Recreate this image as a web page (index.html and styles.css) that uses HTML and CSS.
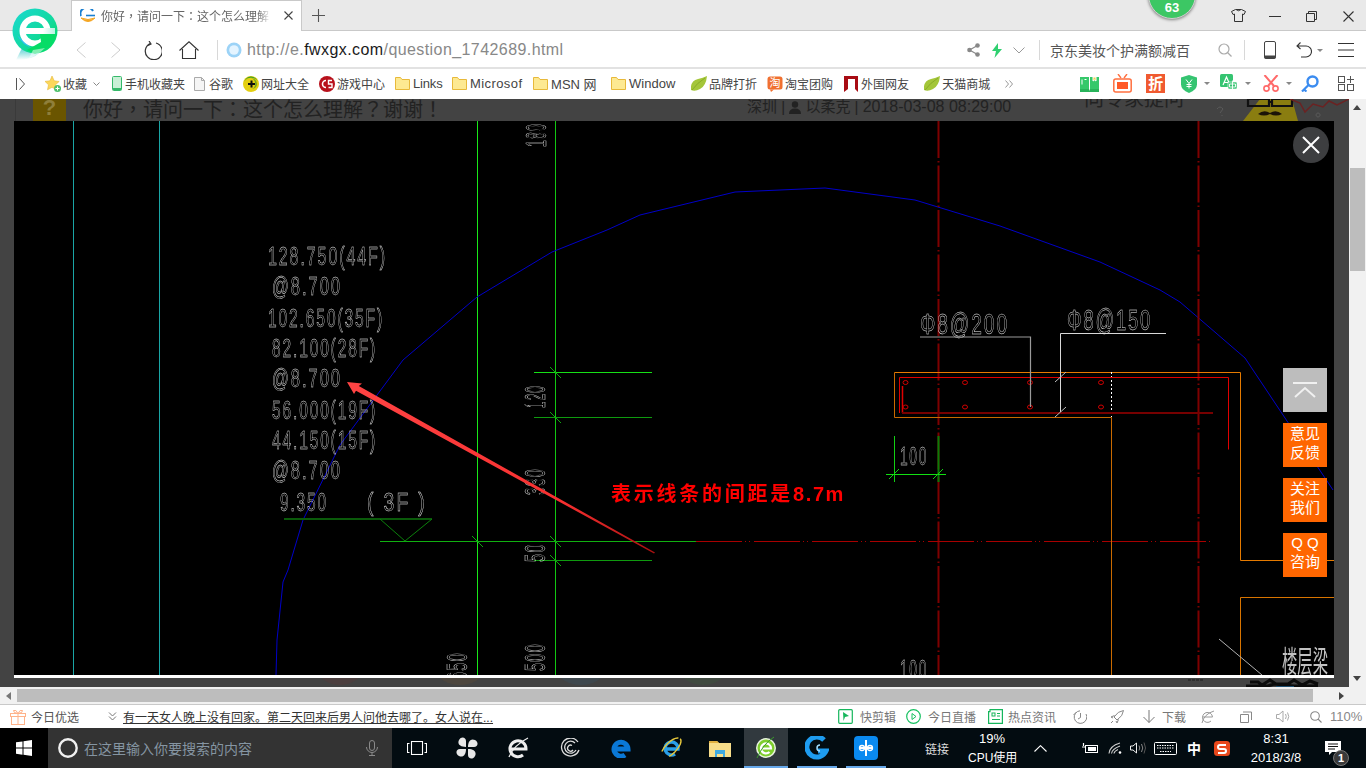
FILE: index.html
```html
<!DOCTYPE html>
<html lang="zh-CN">
<head>
<meta charset="utf-8">
<title>你好，请问一下：这个怎么理解？谢谢！</title>
<link rel="stylesheet" href="styles.css">
</head>
<body>
<div class="browser">
  <svg class="brand" width="48" height="56" viewBox="0 0 48 56">
    <defs>
      <linearGradient id="lg" x1="0" y1="0" x2="1" y2="1"><stop offset="0" stop-color="#1bd9d2"/><stop offset=".55" stop-color="#12d9a0"/><stop offset="1" stop-color="#00dd55"/></linearGradient>
      <linearGradient id="lt" x1="0" y1="0" x2="0" y2="1"><stop offset="0" stop-color="#2fc0f0"/><stop offset=".55" stop-color="#8fdfe0"/><stop offset="1" stop-color="#fff"/></linearGradient>
      <linearGradient id="lb" x1="0" y1="0" x2="1" y2="0"><stop offset="0" stop-color="#fff"/><stop offset=".6" stop-color="#fff"/><stop offset="1" stop-color="#b8f2e2"/></linearGradient>
    </defs>
    <path d="M14 36 L5 54 Q22 54 28 47 L36 38Z" fill="url(#lt)"/>
    <circle cx="24" cy="25" r="22.5" fill="url(#lg)"/>
    <path d="M13 38 Q8 33 6 29 L20 42Z" fill="#2fc0f0"/>
    <circle cx="24" cy="25" r="12.5" fill="none" stroke="#fff" stroke-width="6"/>
    <rect x="14" y="22" width="30" height="6" fill="url(#lb)"/>
    <path d="M29 28 H46 L40 40 L24 48 L16 44 L30 36Z" fill="#06dc66"/>
    <path d="M18 52 Q26 50 34 42 L22 44Z" fill="#fff" opacity=".5"/>
  </svg>

  <header class="tabbar">
    <div class="tab">
      <svg width="16" height="14" viewBox="0 0 16 14" fill="none"><path d="M1 7 A6 5.500 0 0 1 13 2" stroke="#1a7fd0" stroke-width="2"/><path d="M1 9 Q8 16 15 9 Q8 12 1 9z" fill="#f5a623" stroke="#f5a623"/><path d="M6 6.500 H15" stroke="#1a7fd0" stroke-width="1.600"/></svg>
      <span class="tab-title" lang="zh-Hant">你好，请问一下：这个怎么理解？谢谢！</span>
      <svg class="tab-x" width="9" height="9" viewBox="0 0 9 9"><path d="M.5.5l8 8M8.5.5l-8 8" stroke="#444" stroke-width="1.1"/></svg>
    </div>
    <svg class="tab-plus" width="13" height="13" viewBox="0 0 13 13"><path d="M6.5 0v13M0 6.5h13" stroke="#555" stroke-width="1.1"/></svg>
    <div class="win-badge">63</div>
    <svg class="win-shirt" width="15" height="13" viewBox="0 0 15 13" fill="none"><path d="M4.5.5 H10.5 L14.5 2.5 L13 5.5 L11.5 5 V12.5 H3.5 V5 L2 5.5 L.5 2.5Z M5 .5 Q7.5 3 10 .5" stroke="#333"/></svg>
    <svg class="win-min" width="12" height="1" viewBox="0 0 12 1"><path d="M0 .5h12" stroke="#333"/></svg>
    <svg class="win-max" width="11" height="11" viewBox="0 0 11 11" fill="none"><path d="M.5 2.5h8v8h-8zM2.5 2.5v-2h8v8h-2" stroke="#333"/></svg>
    <svg class="win-close" width="11" height="11" viewBox="0 0 11 11"><path d="M.5.5l10 10M10.5.5l-10 10" stroke="#333" stroke-width="1.1"/></svg>
  </header>

  <nav class="toolbar">
    <svg class="t-back" width="10" height="16" viewBox="0 0 10 16" fill="none"><path d="M9.5.5L1 8l8.500 7.500" stroke="#ccc"/></svg>
    <svg class="t-fwd" width="10" height="16" viewBox="0 0 10 16" fill="none"><path d="M.5.500L9 8 .5 15.500" stroke="#ccc"/></svg>
    <svg class="t-ref" width="19" height="19" viewBox="0 0 19 19" fill="none"><path d="M7 2.600A8.500 8.500 0 1 0 13 2M6 0l2 3-3 1.500" stroke="#333" stroke-width="1.200"/></svg>
    <svg class="t-home" width="20" height="18" viewBox="0 0 20 18" fill="none"><path d="M.5 9.500L10 .8l9.500 8.700M3.500 8v9.500h13V8" stroke="#333" stroke-width="1.100"/></svg>
    <i class="t-sep"></i>
    <svg class="t-sec" width="16" height="16" viewBox="0 0 16 16"><circle cx="8" cy="8" r="7.500" fill="#9cd3f7"/><circle cx="8" cy="8" r="4.800" fill="#e4f4ff"/></svg>
    <div class="url"><span class="url-dim">http://e.</span><span class="url-dark">fwxgx.com</span><span class="url-dim">/question_1742689.html</span></div>
    <svg class="t-share" width="13" height="14" viewBox="0 0 13 14"><circle cx="2.500" cy="7" r="2.300" fill="#888"/><circle cx="10.500" cy="2.500" r="2.300" fill="#888"/><circle cx="10.500" cy="11.500" r="2.300" fill="#888"/><path d="M2.500 7l8-4.500M2.500 7l8 4.500" stroke="#888" stroke-width="1.200"/></svg>
    <svg class="t-bolt" width="10" height="15" viewBox="0 0 10 15"><path d="M6 0L0 8h4L2.500 15 10 6H6z" fill="#30d070"/></svg>
    <svg class="t-chev" width="12" height="7" viewBox="0 0 12 7" fill="none"><path d="M.5.500L6 6 11.500.5" stroke="#999"/></svg>
    <i class="t-sep s2"></i>
    <div class="sbox">京东美妆个护满额减百</div>
    <svg class="t-mag" width="14" height="14" viewBox="0 0 14 14" fill="none"><circle cx="6" cy="6" r="5" stroke="#aaa" stroke-width="1.200"/><path d="M9.500 9.500L13.500 13.500" stroke="#aaa" stroke-width="1.200"/></svg>
    <i class="t-sep s3"></i>
    <svg class="t-phone" width="12" height="18" viewBox="0 0 12 18" fill="none"><rect x=".5" y=".5" width="11" height="17" rx="1.500" stroke="#444"/><path d="M.5 14.500h11v3H.5z" fill="#444"/></svg>
    <svg class="t-undo" width="16" height="16" viewBox="0 0 16 16" fill="none"><path d="M1 4h9a5 5 0 0 1 0 11H5M4.500.5L1 4l3.500 3" stroke="#333" stroke-width="1.100"/></svg>
    <svg class="t-drop" width="6" height="3" viewBox="0 0 6 3"><path d="M0 0h6L3 3z" fill="#888"/></svg>
    <svg class="t-menu" width="16" height="14" viewBox="0 0 16 14"><path d="M0 .5h16M0 7h16M0 13.500h16" stroke="#333"/></svg>
  </nav>

  <nav class="bookmarks">
    <svg class="b-side" width="9" height="12" viewBox="0 0 9 12" fill="none"><path d="M.5 0v12M3.500.5L8.500 6l-5 5.500" stroke="#555"/></svg>
    <div class="bm b-fav">
      <svg width="16" height="16" viewBox="0 0 16 16"><path d="M7 0l2.200 4.800 5 .6-3.700 3.400 1 5L7 11.300 2.500 13.800l1-5L0 5.400l5-.6z" fill="#fbd75b" stroke="#e8b93a" stroke-width=".6"/><circle cx="12.500" cy="12.500" r="3.500" fill="#4cc06a"/><path d="M12.500 10.500v4M10.500 12.500h4" stroke="#fff"/></svg>
      <span>收藏</span>
      <svg class="b-down" width="7" height="4" viewBox="0 0 7 4" fill="none"><path d="M.5.500L3.500 3.500 6.500.5" stroke="#888"/></svg>
    </div>
    <div class="bm b-mob"><svg width="10" height="15" viewBox="0 0 10 15" fill="none"><rect x=".5" y=".5" width="9" height="14" rx="1" stroke="#36b96a"/><path d="M1 12h8v2H1z" fill="#36b96a"/><rect x="1" y="1" width="8" height="11" fill="#c9f0d6"/></svg><span>手机收藏夹</span></div>
    <div class="bm b-doc"><svg width="11" height="14" viewBox="0 0 11 14" fill="#f5f5f5" stroke="#aaa"><path d="M.5.500h7l3 3v10H.5z"/><path d="M7.500.500v3h3" fill="none"/></svg><span>谷歌</span></div>
    <div class="bm b-tight"><svg width="16" height="16" viewBox="0 0 16 16"><circle cx="8" cy="8" r="8" fill="#e4cf10"/><path d="M1 8a7 7 0 0 1 14-1 6 5 0 0 0-14 1z" fill="#3a9e2a"/><path d="M8 2a6 6 0 0 1 6 6 5 5 0 0 1-5 5 6 6 0 0 0-1-11z" fill="#2d8a22" opacity=".6"/><path d="M8.500 4.500v7M5 8h7" stroke="#111" stroke-width="2"/></svg><span>网址大全</span></div>
    <div class="bm b-tight"><svg width="16" height="16" viewBox="0 0 16 16"><circle cx="8" cy="8" r="8" fill="#b8111c"/><path d="M7 4.500A3.500 3.500 0 1 0 7 11.500" fill="none" stroke="#fff" stroke-width="1.600"/><path d="M13 4.500H9.500V8H13V11.500H9.500" fill="none" stroke="#fff" stroke-width="1.400"/></svg><span>游戏中心</span></div>
    <div class="bm"><svg width="15" height="13" viewBox="0 0 15 13"><use href="#folder"/></svg><span class="lat w-links">Links</span></div>
    <div class="bm b-ms"><svg width="15" height="13" viewBox="0 0 15 13"><use href="#folder"/></svg><span class="lat w-ms">Microsof</span></div>
    <div class="bm b-wide"><svg width="15" height="13" viewBox="0 0 15 13"><use href="#folder"/></svg><span class="lat w-msn">MSN 网</span></div>
    <div class="bm b-wide"><svg width="15" height="13" viewBox="0 0 15 13"><use href="#folder"/></svg><span class="lat w-win">Window</span></div>
    <div class="bm b-tight"><svg width="16" height="15" viewBox="0 0 16 15"><use href="#leaf"/></svg><span>品牌打折</span></div>
    <div class="bm b-tao"><svg width="16" height="16" viewBox="0 0 16 16"><rect x=".5" y=".5" width="15" height="13" rx="2.500" fill="#f07030"/><path d="M3 13.500l1 2.500 3-2.500z" fill="#f07030"/><text x="8" y="11" class="svg-tao">淘</text></svg><span>淘宝团购</span></div>
    <div class="bm b-wide"><svg width="14" height="16" viewBox="0 0 14 16"><path d="M0 0h14v16l-3-3V3H4v10l-4 3z" fill="#a80c14"/></svg><span>外国网友</span></div>
    <div class="bm b-tight b-wide"><svg width="16" height="15" viewBox="0 0 16 15"><use href="#leaf"/></svg><span>天猫商城</span></div>
    <svg class="b-more" width="8" height="8" viewBox="0 0 8 8" fill="none"><path d="M.5.500L3.500 4 .5 7.500M4.500.5L7.500 4l-3 3.500" stroke="#999"/></svg>
    <svg class="r-book" width="19" height="16" viewBox="0 0 19 16"><path d="M0 1h9v14H0zM10 1h9v14h-9z" fill="#35c86a"/><path d="M0 13h9l.5 2 .5-2h9v3H0z" fill="#28b35a"/><path d="M2 3.500v5M13 1h3v4l-1.500-1L13 5z" stroke="#fff" fill="#f7c948"/><path d="M4.500 3.500h2" stroke="#fff"/></svg>
    <svg class="r-tv" width="19" height="19" viewBox="0 0 19 19" fill="none"><rect x=".8" y="5" width="17.400" height="13" rx="2" stroke="#ff7040" stroke-width="1.500"/><rect x="4" y="8" width="11" height="7" fill="#ff5a28"/><path d="M5 0l3 4M14 0l-3 4" stroke="#ff7040" stroke-width="1.400"/></svg>
    <div class="r-zhe">折</div>
    <svg class="r-shield" width="16" height="18" viewBox="0 0 16 18"><path d="M8 0l8 2.500v7Q16 15 8 18 0 15 0 9.500v-7z" fill="#35c471"/><path d="M5 4.500l3 4 3-4M8 8.500v5M5.500 9.500h5M5.500 11.500h5" stroke="#fff" fill="none"/></svg>
    <svg class="r-arr a1" width="6" height="3" viewBox="0 0 6 3"><path d="M0 0h6L3 3z" fill="#888"/></svg>
    <svg class="r-tr" width="19" height="19" viewBox="0 0 19 19"><rect width="13" height="13" rx="1.500" fill="#35c471"/><path d="M3 11L6.500 3 10 11M4.500 8.500h4" stroke="#fff" fill="none" stroke-width="1.200"/><rect x="8" y="8" width="9" height="7" rx="1" fill="#35c471" stroke="#fff" stroke-width=".6"/><path d="M12.500 6.500v12M9.500 10h6v3h-6z" stroke="#fff" fill="none" stroke-width=".9"/></svg>
    <svg class="r-arr a2" width="6" height="3" viewBox="0 0 6 3"><path d="M0 0h6L3 3z" fill="#888"/></svg>
    <svg class="r-cut" width="16" height="17" viewBox="0 0 16 17" fill="none"><path d="M1.500 0L11 11M14.500 0L5 11" stroke="#ff6a6a" stroke-width="2"/><circle cx="3.500" cy="13.500" r="2.600" stroke="#ff6a6a" stroke-width="1.600"/><circle cx="12.500" cy="13.500" r="2.600" stroke="#ff6a6a" stroke-width="1.600"/></svg>
    <svg class="r-arr a3" width="6" height="3" viewBox="0 0 6 3"><path d="M0 0h6L3 3z" fill="#888"/></svg>
    <svg class="r-key" width="18" height="17" viewBox="0 0 18 17" fill="none"><circle cx="11.500" cy="6.500" r="5" stroke="#3b8cf0" stroke-width="2.400"/><path d="M7.500 10L1 16.500M3 14.500L5.500 16.500" stroke="#3b8cf0" stroke-width="2.200"/></svg>
    <svg class="r-grid" width="16" height="15" viewBox="0 0 16 15" fill="none" stroke="#555"><rect x=".5" y=".5" width="6" height="6"/><rect x=".5" y="8.500" width="6" height="6"/><rect x="9.500" y="8.500" width="6" height="6"/><path d="M12.500 0v7M9 3.500h7"/></svg>
  </nav>

  <div class="content">
    <main class="viewer">
      <div class="page-head">
        <div class="qmark">?</div>
        <div class="q-title" lang="zh-Hant">你好，请问一下：这个怎么理解？谢谢！</div>
        <div class="q-meta">深圳 | <svg width="12" height="13" viewBox="0 0 12 13"><circle cx="6" cy="3.500" r="3.200" fill="#222"/><path d="M0 13q0-5.500 6-5.500T12 13z" fill="#222"/></svg> 以柔克 | <span class="q-date">2018-03-08 08:29:00</span></div>
        <div class="q-ask">向专家提问</div>
      </div>
      <svg class="doodle" width="139" height="22" viewBox="0 0 139 22">
        <path d="M33 22L50 0H82L88 22z" fill="#8a7d10"/>
        <path d="M38 0h21v7H38zM62 0h20v7H62zM59 3h3" fill="none" stroke="#111" stroke-width="2.200"/>
        <path d="M48 15q6-5 12-1 6-4 12 1-6 3-12 0-6 3-12 0z" fill="#1c1408"/>
        <path d="M80 0l10 4 5 9 8-8 10 3 6-6 8 4 12-6" fill="none" stroke="#6b2222" stroke-width="1.500"/>
        <path d="M7 10q3-4 6 0l-3 4M12 16v1M108 18a2 2 0 1 1 .1 0" fill="none" stroke="#5a5a5a"/>
      </svg>
      <svg class="under" width="1349" height="12" viewBox="0 0 1349 12">
        <ellipse cx="340" cy="-8" rx="22" ry="16" fill="#4c3f3f"/>
        <ellipse cx="460" cy="-8" rx="24" ry="16" fill="#4d463e"/>
        <ellipse cx="581" cy="-8" rx="24" ry="16" fill="#3f484e"/>
        <ellipse cx="703" cy="-8" rx="23" ry="16" fill="#404a40"/>
        <path d="M1250 5h8l4 3 8-5 6 4h12l6-4 8 5 8-4 8 3M1246 9h22l6-2 20 2h24" fill="none" stroke="#0c0c0c" stroke-width="3"/>
        <path d="M1276 10h18" stroke="#1f4f70" stroke-width="2"/>
        <path d="M1188 3h16" stroke="#2a2a2a" stroke-width="1.500" stroke-dasharray="3 1"/>
      </svg>
      <figure class="lightbox">
        <svg class="drawing" width="1320" height="554" viewBox="14 121 1320 554">
          <defs>
            <linearGradient id="arrow" gradientUnits="userSpaceOnUse" x1="347" y1="382" x2="655" y2="553"><stop offset="0" stop-color="#ff4444"/><stop offset=".7" stop-color="#f83030"/><stop offset="1" stop-color="#a81010"/></linearGradient>
          </defs>
          <rect x="14" y="121" width="1320" height="554" fill="#000"/>
          <path d="M73.500 121V675M159.500 121V675" stroke="#1aa5a5"/>
          <path d="M477.500 121V675" stroke="#18e818"/>
          <path d="M555.500 121V675" stroke="#12c612"/>
          <path d="M276 675L277 640 283 582 288 570 303 520 340 445 403 360 477 297 552 252 607 230 640 215 735 192 825 188 915 200 1000 226 1100 262 1160 290 1180 302 1245 358 1333 490" fill="none" stroke="#0000c8"/>
          <path d="M938.500 121V675M1198.500 121V675" stroke="#7e0000" stroke-width="2" stroke-dasharray="37 3 1.500 3"/>

          <path d="M534 372.500H652" stroke="#16e016"/>
          <path d="M534 417.500H652M534 560.500H652" stroke="#0f9a0f"/>
          <path d="M380 541.500H696" stroke="#10b010"/>
          <path d="M696 541.500H1213" stroke="#a80000" stroke-dasharray="46 3 1 3 1 4"/>
          <path d="M284 519H432" stroke="#0a5a0a" stroke-width="2"/>
          <path d="M380 519L405 541 432 519" fill="none" stroke="#0c800c"/>
          <path d="M550 367l11 11M550 412l11 11M472 536l11 11M550 536l11 11M550 555l11 11" stroke="#0fa80f"/>

          <path d="M894.500 372.500H1240.500V560.500H1334" fill="none" stroke="#e57a00"/>
          <path d="M894.500 372.500V417.500H1111.500V675" fill="none" stroke="#c96a00"/>
          <path d="M1111.500 372V417" stroke="#fff" stroke-dasharray="2 2"/>
          <path d="M1240.500 675V597.500H1334" fill="none" stroke="#d87400"/>
          <path d="M899.500 413V377.500H1228.500V449.500" fill="none" stroke="#e00000"/>
          <path d="M902.500 386V413" stroke="#e00000" stroke-width="1.500"/>
          <path d="M902 413H1213" stroke="#760000" stroke-width="2"/>
          <g fill="none" stroke="#d00000"><ellipse cx="905.500" cy="382.500" rx="2.500" ry="2"/><ellipse cx="965" cy="382.500" rx="2.500" ry="2"/><ellipse cx="1030" cy="382.500" rx="2.500" ry="2"/><ellipse cx="1101" cy="382.500" rx="2.500" ry="2"/><ellipse cx="905.500" cy="407" rx="2.500" ry="2"/><ellipse cx="965" cy="407" rx="2.500" ry="2"/><ellipse cx="1030" cy="407" rx="2.500" ry="2"/><ellipse cx="1101" cy="407" rx="2.500" ry="2"/></g>

          <path d="M920 337H1030.500V407" fill="none" stroke="#9a9a9a" stroke-width="1.200"/>
          <path d="M1166 333.500H1060.500V412" fill="none" stroke="#d8d8d8"/>
          <path d="M1055 382l11-10M1055 417l11-10" stroke="#bbb"/>

          <path d="M894.500 436V482" stroke="#12d012"/>
          <path d="M938.500 436V482" stroke="#087c08" stroke-width="2"/>
          <path d="M886 474.500H946" stroke="#12e012"/>
          <path d="M889 479l10-10M933 479l10-10" stroke="#12d012"/>
          <path d="M1219 639L1262 675" stroke="#b0b0b0"/>

          <g class="cad">
            <text x="268" y="265" textLength="119" lengthAdjust="spacingAndGlyphs">128.750(44F)</text>
            <text x="272" y="295" textLength="70" lengthAdjust="spacingAndGlyphs">@8.700</text>
            <text x="268" y="327" textLength="116" lengthAdjust="spacingAndGlyphs">102.650(35F)</text>
            <text x="272" y="357" textLength="105" lengthAdjust="spacingAndGlyphs">82.100(28F)</text>
            <text x="272" y="387" textLength="70" lengthAdjust="spacingAndGlyphs">@8.700</text>
            <text x="272" y="419" textLength="105" lengthAdjust="spacingAndGlyphs">56.000(19F)</text>
            <text x="272" y="449" textLength="105" lengthAdjust="spacingAndGlyphs">44.150(15F)</text>
            <text x="272" y="479" textLength="70" lengthAdjust="spacingAndGlyphs">@8.700</text>
            <text x="280" y="511" textLength="48" lengthAdjust="spacingAndGlyphs">9.350</text>
            <text x="367" y="511" textLength="60" lengthAdjust="spacingAndGlyphs" xml:space="preserve">( 3F )</text>
            <text x="900" y="465" textLength="28" lengthAdjust="spacingAndGlyphs">100</text>
            <text x="900" y="678" textLength="28" lengthAdjust="spacingAndGlyphs">100</text>
            <text x="920" y="334" textLength="89" lengthAdjust="spacingAndGlyphs" class="big">Φ8@200</text>
            <text x="1067" y="330" textLength="85" lengthAdjust="spacingAndGlyphs" class="big">Φ8@150</text>
            <text transform="translate(546 147) rotate(-90)" textLength="24" lengthAdjust="spacingAndGlyphs" class="big">180</text>
            <text transform="translate(545 408) rotate(-90)" textLength="23" lengthAdjust="spacingAndGlyphs" class="big">120</text>
            <text transform="translate(545 495) rotate(-90)" textLength="27" lengthAdjust="spacingAndGlyphs" class="big">330</text>
            <text transform="translate(545 562) rotate(-90)" textLength="19" lengthAdjust="spacingAndGlyphs" class="big">50</text>
            <text transform="translate(545 671) rotate(-90)" textLength="28" lengthAdjust="spacingAndGlyphs" class="big">500</text>
            <text transform="translate(467 680) rotate(-90)" textLength="28" lengthAdjust="spacingAndGlyphs" class="big">650</text>
            <text x="1282" y="672" textLength="46" lengthAdjust="spacingAndGlyphs" class="cjk">楼层梁</text>
          </g>

          <polygon points="347,382 362,383.500 358.800,386 655,552.500 654,553.500 356,390.800 354,394" fill="url(#arrow)"/>
          <text x="611" y="501" class="note">表示线条的间距是<tspan class="note-num">8.7m</tspan></text>
        </svg>
        <button class="lb-close" type="button" aria-label="关闭"><svg width="18" height="18" viewBox="0 0 18 18"><path d="M1 1l16 16M17 1L1 17" stroke="#fff" stroke-width="2"/></svg></button>
      </figure>
      <aside class="side-tools">
        <div class="tool tool-top"><svg width="26" height="18" viewBox="0 0 26 18" fill="none" stroke="#f0f0f0" stroke-width="2"><path d="M1 2h24M3 16L13 7l10 9"/></svg></div>
        <div class="tool">意见<br>反馈</div>
        <div class="tool">关注<br>我们</div>
        <div class="tool tool-qq">Q Q<br>咨询</div>
      </aside>
    </main>
    <div class="vscroll">
      <svg class="sc-up" width="8" height="5" viewBox="0 0 8 5"><path d="M4 0l4 5H0z" fill="#444"/></svg>
      <div class="vthumb"></div>
      <svg class="sc-down" width="8" height="5" viewBox="0 0 8 5"><path d="M0 0h8L4 5z" fill="#444"/></svg>
    </div>
  </div>

  <div class="hscroll">
    <svg width="5" height="8" viewBox="0 0 5 8"><path d="M5 0v8L0 4z" fill="#777"/></svg>
    <div class="hthumb"></div>
    <svg width="5" height="8" viewBox="0 0 5 8"><path d="M0 0v8l5-4z" fill="#444"/></svg>
  </div>

  <footer class="status">
    <svg class="st-gift" width="16" height="16" viewBox="0 0 16 16" fill="none" stroke="#ffb38a"><rect x=".5" y="4.500" width="15" height="3"/><rect x="1.500" y="7.500" width="13" height="8"/><path d="M8 4.500v11M8 4.500Q3 4 3.500 1.500 6 0 8 4.500 10 0 12.500 1.500 13 4 8 4.500"/></svg>
    <span class="st-lbl st-today">今日优选</span>
    <svg class="st-dbl" width="9" height="9" viewBox="0 0 9 9" fill="none" stroke="#777"><path d="M1 .5L4.500 4 8 .5M1 4.500L4.500 8 8 4.500"/></svg>
    <a class="st-news">有一天女人晚上没有回家。第二天回来后男人问他去哪了。女人说在...</a>
    <svg class="st-i1" width="15" height="15" viewBox="0 0 15 15" fill="none"><rect x=".7" y=".7" width="13.600" height="13.600" rx="1" stroke="#16b65c" stroke-width="1.200"/><path d="M5 3l6 4-4 1-1.500 4z" fill="#16b65c"/></svg>
    <span class="st-lbl st-l1">快剪辑</span>
    <svg class="st-i2" width="15" height="15" viewBox="0 0 15 15" fill="none"><circle cx="7.500" cy="7.500" r="6.800" stroke="#16c060" stroke-width="1.200"/><path d="M6 4.500l4 3-4 3z" stroke="#16c060"/></svg>
    <span class="st-lbl st-l2">今日直播</span>
    <svg class="st-i3" width="15" height="15" viewBox="0 0 15 15" fill="none" stroke="#16b65c"><path d="M.6 2.600h1.400V.6h12.400v13.800H.6z" stroke-width="1.200"/><rect x="4" y="4" width="3" height="3"/><path d="M9 4.500h3M9 7h3M4 10.500h8"/></svg>
    <span class="st-lbl st-l3">热点资讯</span>
    <svg class="st-i4" width="14" height="14" viewBox="0 0 14 14" fill="none" stroke="#888"><path d="M13 4A6.300 6.300 0 1 1 7 .8"/><path d="M7.500 3v4.500L5 9M.5 5l3-3"/></svg>
    <svg class="st-i5" width="14" height="14" viewBox="0 0 14 14" fill="none" stroke="#888"><path d="M13.500.5Q8 1 4 7l3 3q6-4 6.500-9.500zM4.500 5.500L1 7l2 1M8.500 9.500L7 13l-1-2M3 11l-2 2"/></svg>
    <svg class="st-i6" width="12" height="13" viewBox="0 0 12 13" fill="none" stroke="#777"><path d="M6 0v12.500M.5 7L6 12.500 11.500 7"/></svg>
    <span class="st-lbl st-l4">下载</span>
    <svg class="st-i7" width="14" height="14" viewBox="0 0 14 14" fill="none" stroke="#999"><path d="M1.500 7h10A5 5 0 1 0 10 11M1 13q2-9 12-12"/></svg>
    <svg class="st-i8" width="12" height="12" viewBox="0 0 12 12" fill="none" stroke="#888"><path d="M.5 3.500h8v8h-8zM3 1h8.500v8"/></svg>
    <svg class="st-i9" width="14" height="13" viewBox="0 0 14 13" fill="none" stroke="#aaa"><path d="M.5 4.500h2.500L7 1v11L3 8.500H.5zM9.500 4q1.500 2.500 0 5M11.500 2.500q2.500 4 0 8"/></svg>
    <svg class="st-i10" width="12" height="12" viewBox="0 0 12 12" fill="none" stroke="#888" stroke-width="1.100"><circle cx="5" cy="5" r="4.300"/><path d="M8 8l3.500 3.500"/></svg>
    <span class="st-zoom">110%</span>
  </footer>

  <div class="taskbar">
    <div class="tk-start"><svg width="16" height="16" viewBox="0 0 16 16"><path d="M0 2.300l6.500-.9v6.200H0zM7.500 1.300L16 0v7.600H7.500zM0 8.500h6.500v6.200L0 13.700zM7.500 8.500H16V16l-8.500-1.200z" fill="#fff"/></svg></div>
    <div class="tk-search">
      <svg width="20" height="20" viewBox="0 0 20 20" fill="none"><circle cx="10" cy="10" r="8.700" stroke="#f0f0f0" stroke-width="2.400"/></svg>
      <span class="tk-hint">在这里输入你要搜索的内容</span>
      <svg class="tk-mic" width="12" height="16" viewBox="0 0 12 16" fill="none" stroke="#8a8a8a"><rect x="3.500" y=".5" width="5" height="10" rx="2.500"/><path d="M.5 7a5.500 5.500 0 0 0 11 0M6 12.500v3M3 15.500h6"/></svg>
    </div>
    <div class="tk-app"><svg width="20" height="14" viewBox="0 0 20 14" fill="none" stroke="#fff" stroke-width="1.100"><rect x="4.500" y=".5" width="11" height="13"/><path d="M2.500 2.500H.5v9h2M17.500 2.500h2v9h-2"/></svg></div>
    <div class="tk-app"><svg width="22" height="22" viewBox="0 0 22 22" fill="#e8e8e8"><path d="M10 10C4 10 1 7 3 3s7-3 7 1zM12 10c0-6 3-9 7-7s3 7-1 7zM12 12c6 0 9 3 7 7s-7 3-7-1zM10 12c0 6-3 9-7 7s-3-7 1-7z"/></svg></div>
    <div class="tk-app"><svg width="22" height="24" viewBox="-11 -12 22 24" fill="none"><path d="M-8 1H8A8 8 0 1 0 5 7" stroke="#eee" stroke-width="3"/><path d="M-9 9Q-4-3 10-10" stroke="#eee" stroke-width="1.300"/></svg></div>
    <div class="tk-app"><svg width="20" height="20" viewBox="-10 -10 20 20" fill="none" stroke="#ddd" stroke-width="1.300"><path d="M8-6A9 9 0 1 0 9 2M5-5A6 6 0 1 0 6 2M2-2.500A3 3 0 1 0 3 2"/></svg></div>
    <div class="tk-app"><svg width="20" height="20" viewBox="-10 -10 20 20" fill="none"><path d="M-7 1H7A7 7 0 1 0 4 7" stroke="#0a78d6" stroke-width="5"/></svg></div>
    <div class="tk-app"><svg width="24" height="24" viewBox="-12 -12 24 24" fill="none"><path d="M-6 1H7A6.500 6.500 0 1 0 4 6" stroke="#2a9fe8" stroke-width="3.400"/><ellipse cx="0" cy="0" rx="13" ry="5.500" transform="rotate(-45)" stroke="#e6c83c" stroke-width="1.400" stroke-dasharray="22 14"/></svg></div>
    <div class="tk-app"><svg width="22" height="18" viewBox="0 0 22 18"><path d="M0 2h8l2 2h12v14H0z" fill="#f7dd8a"/><path d="M0 2h8l2 2H0z" fill="#e0b040"/><path d="M6 11h10v7h-2v-3H8v3H6z" fill="#3fa9e0"/></svg></div>
    <div class="tk-app tk-active"><svg width="22" height="24" viewBox="-11 -12 22 24" fill="none"><circle r="10" fill="#eaf4e0"/><circle r="8.500" fill="#7fce2e"/><path d="M-5 .5H5A5 5 0 1 0 3.500 4" stroke="#fff" stroke-width="2.200"/><path d="M-9 10Q-3-4 8-11" stroke="#3a9a2a" stroke-width="1"/></svg></div>
    <div class="tk-app tk-open"><svg width="24" height="24" viewBox="-12 -12 24 24" fill="none"><path d="M7-8A10 10 0 1 0 9 3H1" stroke="#1e9cf0" stroke-width="5"/><path d="M3-3A3 3 0 1 0 3 3" stroke="#9fdcff" stroke-width="1.500"/></svg></div>
    <div class="tk-app tk-open tk-last"><svg width="24" height="24" viewBox="0 0 24 24" fill="none"><rect width="24" height="24" rx="4" fill="#0a8af0"/><path d="M12 4v16M5 12h14" stroke="#fff" stroke-width="2"/><circle cx="8" cy="12" r="2.500" stroke="#fff" stroke-width="1.300"/><circle cx="16" cy="12" r="2.500" stroke="#fff" stroke-width="1.300"/></svg></div>
    <div class="tray">
      <span class="tr-link">链接</span>
      <div class="tr-cpu"><span class="tr-pct">19%</span><br>CPU使用</div>
      <svg class="tr-chev" width="13" height="7" viewBox="0 0 13 7" fill="none" stroke="#fff" stroke-width="1.100"><path d="M.5 6.500L6.500.7l6 5.800"/></svg>
      <svg class="tr-bat" width="16" height="11" viewBox="0 0 16 11" fill="none"><rect x="3.500" y="2.500" width="12" height="7" stroke="#fff"/><rect x="6" y="4" width="8" height="4" fill="#fff"/><path d="M0 4h3M1.500 0v3" stroke="#fff" stroke-width="1.200"/></svg>
      <svg class="tr-wifi" width="14" height="12" viewBox="0 0 14 12" fill="none" stroke="#ccc" stroke-width="1.100"><path d="M1 11.500Q1.500 4 12 1M3.500 11.500Q4 7 12 4M6 11.500Q6.500 9 10 7.500"/><circle cx="12" cy="10.500" r="1.300" fill="#fff" stroke="none"/></svg>
      <svg class="tr-vol" width="16" height="12" viewBox="0 0 16 12" fill="none" stroke="#eee"><path d="M.5 4h2.500L6.500 1v10L3 8H.5z"/><path d="M9 3.500q1.500 2.500 0 5M11.500 2q2.500 4 0 8" stroke="#888"/><path d="M14 .5q3 5.500 0 11" stroke="#555"/></svg>
      <svg class="tr-kbd" width="23" height="13" viewBox="0 0 23 13" fill="none" stroke="#fff"><rect x=".5" y=".5" width="22" height="12" rx="1"/><path d="M3 3.500h17M3 6h17M6 9.500h11" stroke-dasharray="1.500 1"/></svg>
      <span class="tr-ime">中</span>
      <svg class="tr-s" width="16" height="15" viewBox="0 0 16 15"><rect width="16" height="15" rx="3.500" fill="#e8481c"/><path d="M12 4H6Q4 4 4 6T6 8H10Q12 8 12 10T10 12H4" fill="none" stroke="#fff" stroke-width="2"/></svg>
      <div class="tr-clock"><span>8:31</span><span>2018/3/8</span></div>
      <div class="tr-note">
        <svg width="16" height="15" viewBox="0 0 16 15"><path d="M0 0h16v11H7l-3 3v-3H0z" fill="#fff"/><path d="M3 3h10M3 5.500h10M3 8h7" stroke="#111"/></svg>
        <span class="tr-badge">1</span>
      </div>
    </div>
  </div>
</div>

<svg class="defs" width="0" height="0">
  <defs>
    <g id="folder"><path d="M.5.500h5l1.500 2h7.500v10H.5z" fill="#fde992" stroke="#e8b93a"/></g>
    <g id="leaf"><path d="M0 14Q-1 5 7 3 12 2 16 0 15 10 9 13 4 16 0 14z" fill="#a4c639"/><path d="M1 14Q6 7 14 2" stroke="#7da020" fill="none" stroke-width=".7"/></g>
  </defs>
</svg>
</body>
</html>
```
FILE: styles.css
```css
* { box-sizing: border-box; }
html, body { margin: 0; padding: 0; background: #fff; }
body { overflow: hidden; font-family: "Liberation Sans", "Noto Sans CJK SC", sans-serif; }
svg { display: block; flex: none; }
.defs { position: absolute; }
.browser { position: relative; width: 1366px; height: 768px; display: flex; flex-direction: column; overflow: hidden; }
.brand { position: absolute; left: 11px; top: 6px; z-index: 5; }

/* tab strip */
.tabbar { height: 31px; background: #e9e9e9; border-bottom: 1px solid #c9c9c9; display: flex; align-items: center; position: relative; flex: none; }
.tab { margin-left: 71px; width: 231px; height: 31px; background: #fff; border: 1px solid #c9c9c9; border-bottom: 0; display: flex; align-items: center; padding-left: 8px; position: relative; }
.tab-title { margin-left: 5px; width: 170px; font-family: "Liberation Sans", "Noto Sans CJK TC", sans-serif; font-size: 12px; color: #666; white-space: nowrap; overflow: hidden; -webkit-mask-image: linear-gradient(90deg, #000 92%, transparent); mask-image: linear-gradient(90deg, #000 92%, transparent); }
.tab-x { margin-left: 13px; }
.tab-plus { margin-left: 10px; }
.win-badge { position: absolute; left: 1148px; top: -29px; width: 48px; height: 48px; border-radius: 50%; background: #3cc764; border: 1px solid #cfcfcf; box-shadow: 0 1px 3px rgba(0,0,0,.45); color: #fff; font-size: 13px; font-weight: 700; text-align: center; padding-top: 28px; line-height: 15px; }
.win-shirt { position: absolute; left: 1231px; top: 9px; }
.win-min { position: absolute; left: 1269px; top: 16px; }
.win-max { position: absolute; left: 1306px; top: 11px; }
.win-close { position: absolute; left: 1343px; top: 11px; }

/* address bar */
.toolbar { height: 38px; background: #fff; border-bottom: 2px solid #e2e2e2; display: flex; align-items: center; flex: none; padding: 2px 0 0 76px; }
.t-fwd { margin-left: 25px; }
.t-ref { margin-left: 22px; }
.t-home { margin-left: 17px; }
.t-sep { width: 1px; height: 20px; background: #d8d8d8; margin-left: 18px; flex: none; }
.t-sec { margin-left: 8px; }
.url { margin-left: 5px; width: 720px; font-size: 16px; letter-spacing: .42px; white-space: nowrap; }
.url-dim { color: #888; }
.url-dark { color: #1a1a1a; }
.t-bolt { margin-left: 12px; }
.t-chev { margin-left: 11px; }
.t-sep.s2 { margin-left: 14px; }
.sbox { margin-left: 10px; font-size: 14px; color: #555; width: 140px; white-space: nowrap; }
.t-mag { margin-left: 28px; }
.t-sep.s3 { margin-left: 12px; }
.t-phone { margin-left: 19px; }
.t-undo { margin-left: 20px; }
.t-drop { margin-left: 5px; }
.t-menu { margin-left: 15px; }

/* favourites */
.bookmarks { height: 30px; background: #fff; display: flex; align-items: center; flex: none; padding: 0 0 1px 16px; font-size: 12px; color: #444; }
.bm { display: flex; align-items: center; gap: 3px; margin-right: 10px; white-space: nowrap; }
.b-side { margin-right: 20px; }
.b-fav { gap: 2px; margin-right: 12px; }
.b-down { margin-left: 4px; }
.b-mob { margin-right: 9px; }
.b-doc { gap: 4px; }
.b-tight { gap: 2px; }
.b-tao { gap: 2px; margin-right: 11px; }
.b-ms { margin-right: 11px; }
.b-wide { margin-right: 15px; }
.lat { font-size: 13px; }
.w-links { width: 29px; letter-spacing: -.2px; }
.w-ms { width: 52px; letter-spacing: .4px; }
.w-msn { width: 45px; }
.w-win { width: 47px; }
.svg-tao { font-size: 11px; fill: #fff; text-anchor: middle; }
.r-book { margin-left: 67px; }
.r-tv { margin-left: 14px; }
.r-zhe { margin-left: 14px; width: 19px; height: 19px; background: #f05a30; color: #fff; font-size: 15px; font-weight: 700; line-height: 19px; text-align: center; flex: none; }
.r-shield { margin-left: 16px; }
.r-arr { margin-left: 7px; }
.r-tr { margin-left: 10px; }
.r-cut { margin-left: 12px; }
.r-key { margin-left: 9px; }
.r-grid { margin-left: 19px; }
.r-arr.a2 { margin-left: 6px; }
.r-arr.a3 { margin-left: 7px; }

/* page */
.content { height: 588px; display: flex; flex: none; }
.viewer { position: relative; width: 1349px; background: #434343; overflow: hidden; }
.page-head { height: 22px; display: flex; align-items: center; color: #222; white-space: nowrap; border-left: 1px solid #3a3a3a; margin-left: 15px; padding-left: 17px; font-family: "Liberation Sans", "Noto Sans CJK TC", sans-serif; }
.qmark { width: 33px; height: 22px; background: #6a5500; color: #8f7f3a; font-size: 22px; font-weight: 700; text-align: center; line-height: 18px; flex: none; }
.q-title { margin-left: 17px; width: 664px; font-size: 20px; line-height: 16px; margin-top: -1px; }
.q-meta { display: flex; align-items: center; font-size: 15px; line-height: 16px; white-space: pre; margin-top: -6px; width: 337px; }
.q-date { font-size: 16px; }
.q-ask { font-size: 20px; line-height: 20px; margin-top: -22px; }
.doodle { position: absolute; left: 1210px; top: 0; }
.under { position: absolute; left: 0; top: 578px; }
.lightbox { position: absolute; left: 14px; top: 22px; margin: 0; width: 1320px; height: 557px; border-bottom: 3px solid #fff; background: #000; }
.drawing { overflow: hidden; }
.cad { opacity: .99; }
.cad text { font-family: "Liberation Sans Narrow", "Liberation Sans", sans-serif; font-size: 25px; fill: none; stroke: #f0f0f0; stroke-width: .45px; letter-spacing: 3px; }
.cad text.big { font-size: 30px; }
.cad text.cjk { font-family: "Noto Sans CJK SC", sans-serif; font-size: 30px; fill: #c4c4c4; stroke: none; letter-spacing: 0; }
.note { font-family: "Noto Sans CJK SC", sans-serif; font-size: 20px; font-weight: 700; fill: #f00; letter-spacing: 2.750px; }
.note-num { font-family: "Liberation Sans", sans-serif; letter-spacing: 1.600px; }
.lb-close { position: absolute; left: 1279px; top: 6px; width: 36px; height: 36px; border-radius: 50%; border: 0; padding: 0; background: #3d3e40; display: flex; align-items: center; justify-content: center; }
.side-tools { position: absolute; left: 1283px; top: 269px; display: flex; flex-direction: column; gap: 11px; }
.tool { width: 44px; height: 44px; background: #ff6600; color: #fff; font-size: 15px; line-height: 19px; text-align: center; font-family: "Noto Sans CJK SC", sans-serif; }
.tool-top { background: #bdbdbd; display: flex; align-items: center; justify-content: center; }
.tool-qq { font-family: "Liberation Sans", "Noto Sans CJK SC", sans-serif; }

.vscroll { width: 17px; background: #f1f1f1; position: relative; }
.sc-up { position: absolute; left: 4px; top: 6px; }
.vthumb { position: absolute; left: 1px; top: 69px; width: 15px; height: 103px; background: #bdbdbd; }
.sc-down { position: absolute; left: 4px; top: 577px; }
.hscroll { height: 17px; background: #f1f1f1; display: flex; align-items: center; flex: none; padding-left: 6px; }
.hthumb { margin-left: 6px; width: 1296px; height: 13px; background: #bdbdbd; }
.hscroll svg:last-child { margin-left: 26px; }

/* status bar */
.status { height: 24px; background: #fff; border-top: 1px solid #c9c9c9; display: flex; align-items: center; flex: none; padding-left: 10px; font-size: 12px; color: #666; white-space: nowrap; }
.st-lbl { color: #777; }
.st-today { margin-left: 5px; color: #555; }
.st-dbl { margin-left: 29px; }
.st-news { margin-left: 6px; width: 369px; color: #333; text-decoration: underline; }
.st-i1 { margin-left: 346px; }
.st-l1 { margin-left: 7px; }
.st-i2 { margin-left: 10px; }
.st-l2 { margin-left: 7px; }
.st-i3 { margin-left: 12px; }
.st-l3 { margin-left: 5px; }
.st-i4 { margin-left: 17px; }
.st-i5 { margin-left: 23px; }
.st-i6 { margin-left: 19px; }
.st-l4 { margin-left: 7px; }
.st-i7 { margin-left: 15px; }
.st-i8 { margin-left: 25px; }
.st-i9 { margin-left: 24px; }
.st-i10 { margin-left: 20px; }
.st-zoom { margin-left: 8px; font-size: 13px; color: #888; }

/* taskbar */
.taskbar { height: 40px; background: #030c11; display: flex; flex: none; color: #fff; }
.tk-start { width: 48px; background: #000; display: flex; align-items: center; justify-content: center; }
.tk-search { width: 344px; background: #333; display: flex; align-items: center; padding-left: 10px; }
.tk-hint { margin-left: 6px; font-size: 14px; color: #8595a2; white-space: nowrap; }
.tk-mic { margin-left: 114px; }
.tk-app { width: 50px; display: flex; align-items: center; justify-content: center; position: relative; flex: none; }
.tk-app:nth-child(3) { width: 49px; }
.tk-app:nth-child(4) { width: 51px; }
.tk-app:nth-child(5), .tk-app:nth-child(6) { width: 52px; }
.tk-app:nth-child(8), .tk-app:nth-child(9) { width: 49px; }
.tk-active { width: 44px; background: #31393e; border-bottom: 2px solid #66a8ea; margin-right: 9px; }
.tk-active svg { margin-top: 2px; }
.tk-open { width: 40px; margin-right: 9px; }
.tk-open::after { content: ""; position: absolute; left: 0; right: 0; bottom: 0; height: 2px; background: #66a8ea; }
.tray { display: flex; align-items: center; padding-left: 30px; font-size: 12px; white-space: nowrap; }
.tr-link { color: #ddd; }
.tr-cpu { margin-left: 19px; width: 48px; text-align: center; line-height: 19px; font-size: 12px; }
.tr-pct { font-size: 13px; }
.tr-chev { margin-left: 18px; }
.tr-bat { margin-left: 35px; }
.tr-wifi { margin-left: 10px; }
.tr-vol { margin-left: 8px; }
.tr-kbd { margin-left: 8px; }
.tr-ime { margin-left: 10px; font-size: 14px; font-weight: 700; width: 14px; }
.tr-s { margin-left: 13px; }
.tr-clock { margin-left: 20px; display: flex; flex-direction: column; align-items: center; line-height: 19px; font-size: 13px; width: 52px; }
.tr-note { margin-left: 23px; position: relative; }
.tr-badge { position: absolute; left: 8px; top: 9px; width: 16px; height: 16px; border-radius: 50%; background: #3a3a3a; border: 1px solid #777; font-size: 11px; font-weight: 700; line-height: 14px; text-align: center; }
```
